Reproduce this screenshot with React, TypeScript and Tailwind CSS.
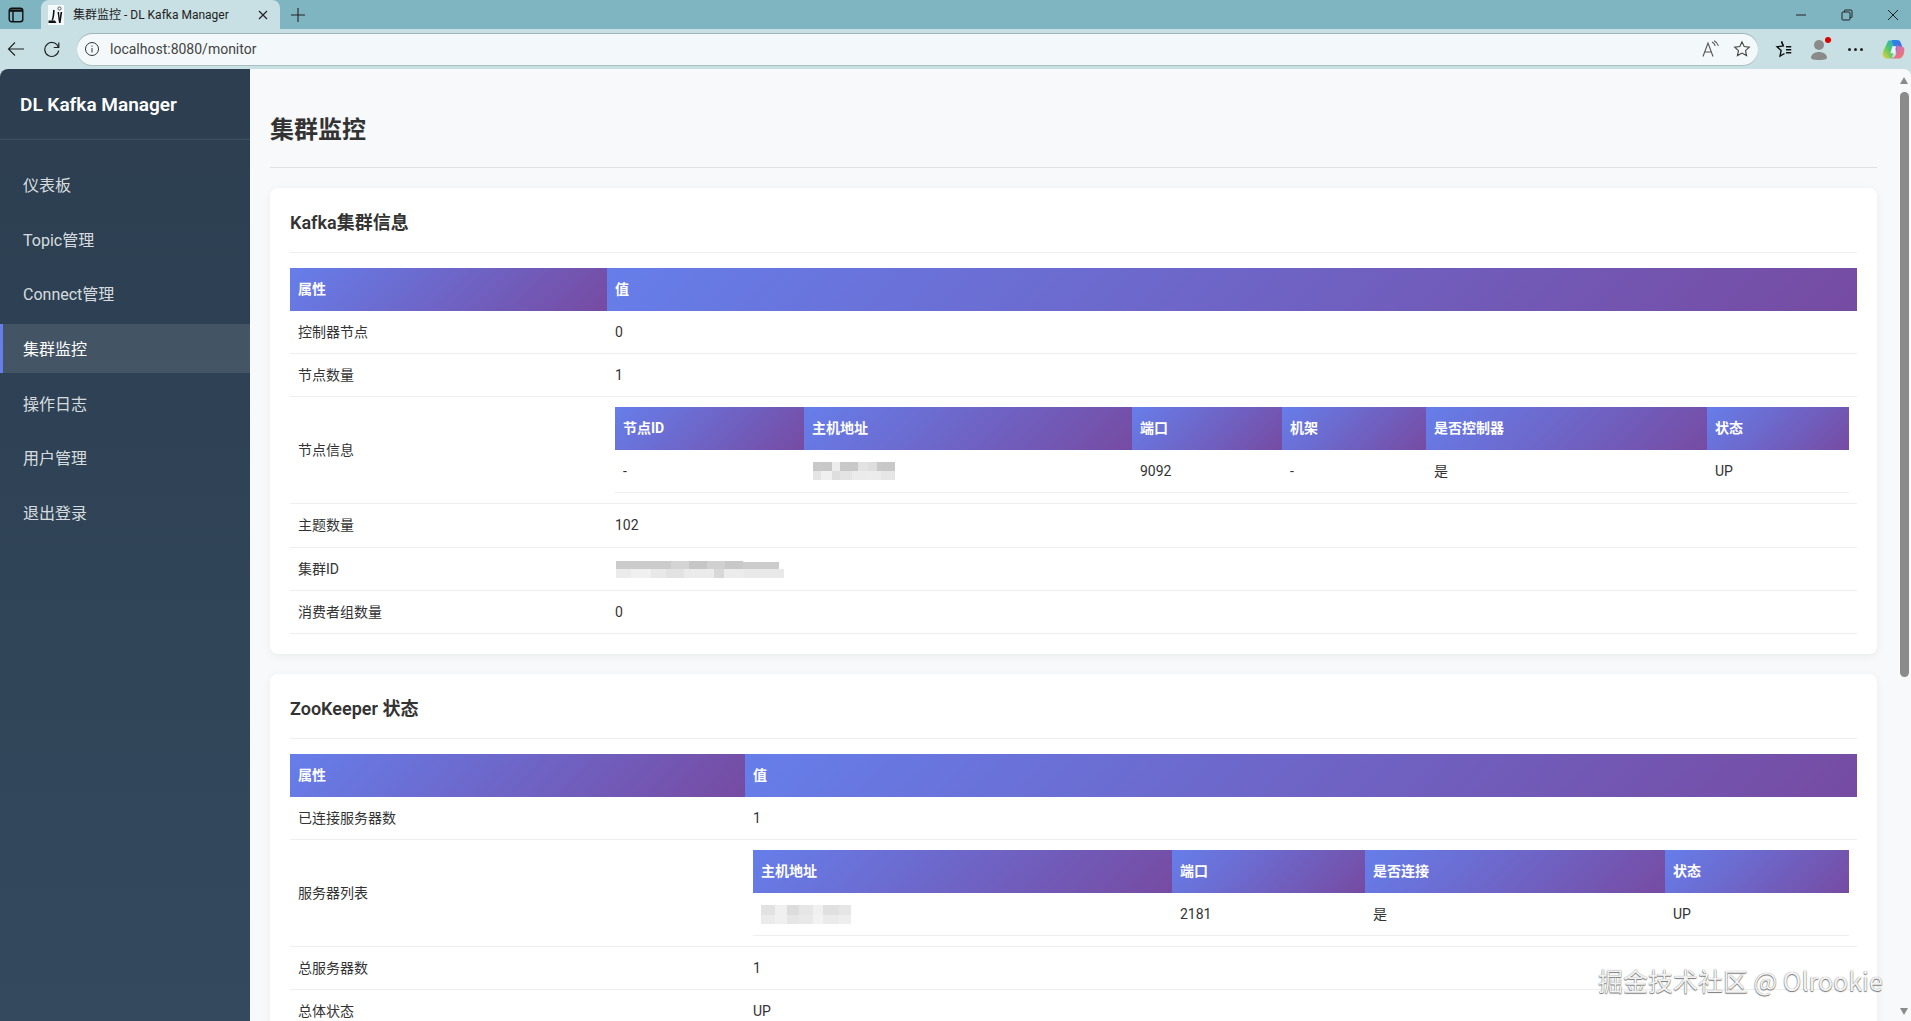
import React from "react";

const FONT = "[font-family:'Roboto','Noto_Sans_CJK_SC',sans-serif]";
const TH = "h-[43px] px-2 text-left text-[14px] font-bold text-white bg-[linear-gradient(135deg,#667eea_0%,#764ba2_100%)] align-middle";
const TD = "h-[43px] px-2 text-[14px] text-[#333] border-b border-[#eeeeee] align-middle";

type Cell = [number, number, number, number, string];

function Mosaic({ w, h, cells }: { w: number; h: number; cells: Cell[] }) {
  return (
    <svg width={w} height={h} viewBox={`0 0 ${w} ${h}`} className="block overflow-visible" style={{ filter: "blur(0.7px)" }}>
      {cells.map(([x, y, cw, ch, c], i) => (
        <rect key={i} x={x} y={y} width={cw} height={ch} fill={c} />
      ))}
    </svg>
  );
}

function Outer({ first, rows }: { first: number; rows: [string, React.ReactNode, boolean?][] }) {
  return (
    <table className="w-full table-fixed border-separate border-spacing-0">
      <colgroup>
        <col style={{ width: first }} />
        <col />
      </colgroup>
      <thead>
        <tr>
          <th className={TH}>属性</th>
          <th className={TH}>值</th>
        </tr>
      </thead>
      <tbody>
        {rows.map(([k, v, nested], i) => (
          <tr key={i} className={k === "主题数量" ? "h-[44px]" : ""}>
            <td className={TD}>{k}</td>
            <td className={TD + (nested ? " pt-[10px] pb-[10px]" : "")}>{v}</td>
          </tr>
        ))}
      </tbody>
    </table>
  );
}

function Inner({ widths, head, row }: { widths: number[]; head: string[]; row: React.ReactNode[] }) {
  return (
    <table className="w-full table-fixed border-separate border-spacing-0">
      <colgroup>
        {widths.map((w, i) => (
          <col key={i} style={{ width: w }} />
        ))}
      </colgroup>
      <thead>
        <tr>
          {head.map((h) => (
            <th key={h} className={TH}>{h}</th>
          ))}
        </tr>
      </thead>
      <tbody>
        <tr>
          {row.map((c, i) => (
            <td key={i} className={TD}>{c}</td>
          ))}
        </tr>
      </tbody>
    </table>
  );
}

const hostCells1: Cell[] = [
  [0, 0, 19, 9, "#c8c8c8"], [19, 0, 8, 9, "#ececec"], [27, 0, 18, 9, "#c8c8c8"], [45, 0, 10, 9, "#e2e2e2"], [55, 0, 9, 9, "#dddddd"], [64, 0, 18, 9, "#c8c8c8"],
  [0, 9, 8, 9, "#e4e4e4"], [8, 9, 11, 9, "#f0f0f0"], [19, 9, 8, 9, "#dedede"], [27, 9, 12, 9, "#e4e4e4"], [39, 9, 15, 9, "#ebebeb"], [54, 9, 14, 9, "#ececec"], [68, 9, 14, 9, "#e6e6e6"],
];
const hostCells2: Cell[] = [
  [0, 0, 14, 10, "#e2e2e2"], [14, 0, 12, 10, "#f0f0f0"], [26, 0, 12, 10, "#dcdcdc"], [38, 0, 14, 10, "#e6e6e6"], [52, 0, 10, 10, "#f0f0f0"], [62, 0, 16, 10, "#e0e0e0"], [78, 0, 12, 10, "#e6e6e6"],
  [0, 10, 14, 9, "#ebebeb"], [14, 10, 12, 9, "#f0f0f0"], [26, 10, 12, 9, "#e6e6e6"], [38, 10, 14, 9, "#e9e9e9"], [52, 10, 10, 9, "#f2f2f2"], [62, 10, 16, 9, "#ebebeb"], [78, 10, 12, 9, "#eeeeee"],
];
const idCells: Cell[] = [
  [0, 1, 55, 8, "#cbcbcb"], [55, 1, 18, 8, "#d4d4d4"], [73, 1, 18, 8, "#c6c6c6"], [91, 1, 18, 8, "#d0d0d0"], [109, 1, 18, 8, "#c8c8c8"], [127, 2, 36, 8, "#cccccc"],
  [0, 9, 15, 9, "#ebebeb"], [15, 9, 20, 9, "#f0f0f0"], [35, 9, 15, 9, "#e8e8e8"], [50, 9, 18, 9, "#e2e2e2"], [68, 9, 30, 9, "#ebebeb"], [98, 9, 10, 9, "#d8d8d8"], [108, 9, 20, 9, "#ececec"], [128, 9, 40, 9, "#e9e9e9"],
];

function Card({ title, pad, children }: { title: string; pad: string; children: React.ReactNode }) {
  return (
    <section className={"bg-white rounded-lg shadow-[0_2px_10px_rgba(0,0,0,0.06)] px-5 pt-5 mb-5 " + pad}>
      <h2 className="text-[18px] leading-[30px] font-semibold text-[#333] pb-[14px] mb-[15px] border-b border-[#eeeeee]">{title}</h2>
      {children}
    </section>
  );
}

const NAV = ["仪表板", "Topic管理", "Connect管理", "集群监控", "操作日志", "用户管理", "退出登录"];

export default function App() {
  return (
    <div className={`h-[1021px] w-[1911px] overflow-hidden flex flex-col relative bg-[#c8e0e4] ${FONT}`}>
      {/* tab strip */}
      <div className="h-[29px] shrink-0 bg-[#7fb4c1] flex items-center">
        <div className="w-[32px] mr-[9px] flex justify-center">
          <svg width="16" height="16" viewBox="0 0 16 16" fill="none" stroke="#111" strokeWidth="1.4">
            <rect x="1.2" y="1.2" width="13.6" height="13.6" rx="2.5" />
            <path d="M1.2 3.6h13.6" strokeWidth="2.4" />
            <path d="M5 4v10.5" />
          </svg>
        </div>
        <div className="w-[239px] h-full bg-[#c8e0e4] rounded-t-lg flex items-center pl-[7px] pr-[10px]">
          <svg width="16" height="20" viewBox="0 0 16 20" className="shrink-0">
            <rect width="16" height="20" fill="#f4fafa" />
            <path d="M0.5 15.5h6.5l1.5 2.500H0.500z" fill="#111" />
            <path d="M3.500 15.500C4.500 12 5 9 5 5h1.600c0 4-.6 8-1.600 10.500z" fill="#111" />
            <path d="M9.500 7h1.600l.5 6.500 1-6.500h1.600l-1.600 11H11z" fill="#111" />
            <circle cx="11.500" cy="3.500" r="1.600" fill="none" stroke="#555" />
          </svg>
          <span className="ml-[9px] text-[12px] text-[#222] whitespace-nowrap">集群监控 - DL Kafka Manager</span>
          <span className="ml-auto mr-[1px]">
            <svg width="12" height="12" viewBox="0 0 12 12" stroke="#222" strokeWidth="1.2"><path d="M2 2l8 8M10 2l-8 8" /></svg>
          </span>
        </div>
        <div className="ml-[10px]">
          <svg width="16" height="16" viewBox="0 0 16 16" stroke="#222" strokeWidth="1.1"><path d="M8 1v14M1 8h14" /></svg>
        </div>
        <div className="ml-auto flex items-center">
          <div className="w-[46px] flex justify-center"><svg width="12" height="12" viewBox="0 0 12 12" stroke="#222"><path d="M1 6h10" /></svg></div>
          <div className="w-[46px] flex justify-center"><svg width="12" height="12" viewBox="0 0 12 12" stroke="#222" fill="none"><rect x="1" y="3" width="8" height="8" rx="1" /><path d="M3.500 3V1.500a.5.5 0 0 1 .5-.5h6a1 1 0 0 1 1 1v6a.5.5 0 0 1-.5.5H9" /></svg></div>
          <div className="w-[46px] flex justify-center mr-[-5px]"><svg width="12" height="12" viewBox="0 0 12 12" stroke="#222"><path d="M1 1l10 10M11 1L1 11" /></svg></div>
        </div>
      </div>
      {/* toolbar */}
      <div className="h-[40px] shrink-0 bg-[#c8e0e4] flex items-center relative">
        <div className="w-[32px] flex justify-center">
          <svg width="18" height="18" viewBox="0 0 18 18" fill="none" stroke="#222" strokeWidth="1.1"><path d="M17 9H1.500M8 2.500L1.500 9 8 15.500" /></svg>
        </div>
        <div className="ml-[2px] w-[36px] flex justify-center">
          <svg width="18" height="18" viewBox="0 0 18 18" fill="none" stroke="#222" strokeWidth="1.2"><path d="M15.500 7.500a7 7 0 1 0 .2 3" /><path d="M15.800 2.500v5h-5" /></svg>
        </div>
        <div className="ml-[7px] w-[1681px] h-[31px] rounded-full bg-[#f3f9fa] shadow-[0_-1px_0_#9fb6ba,0_1px_0_#a9bfc2] flex items-center pl-[7px]">
          <svg width="16" height="16" viewBox="0 0 16 16" fill="none" stroke="#333" strokeWidth="1"><circle cx="8" cy="8" r="6.500" /><path d="M8 7v4.500M8 4.500v1.200" /></svg>
          <span className="ml-[10px] text-[14px] text-[#444]">localhost:8080/monitor</span>
          <div className="ml-auto flex items-center gap-[13px] pr-[7px]">
            <svg width="18" height="18" viewBox="0 0 18 18" fill="none" stroke="#555" strokeWidth="1.1"><path d="M1 16.500L6 3l5 13.500M3 12h6" /><path d="M10 2c1.800.8 2.800 2 3.200 3.800M12 .8c2.200 1 3.800 2.800 4.400 5" /></svg>
            <svg width="18" height="18" viewBox="0 0 24 24" fill="none" stroke="#444" strokeWidth="1.5"><path d="M12 2.500l2.900 6.200 6.800.8-5 4.600 1.400 6.700L12 17.400l-6.100 3.400 1.400-6.700-5-4.600 6.800-.8z" /></svg>
          </div>
        </div>
        <div className="flex items-center ml-[16px]">
          <svg width="18" height="18" viewBox="0 0 24 24" fill="none" stroke="#111" strokeWidth="1.8"><path d="M10 2L12.500 8 4 9l5.500 5L8 21.500l6-3.500" /><path d="M10 2l2 5M16 9h7M16 13h7M16 17h7" /></svg>
          <div className="relative ml-[18px] w-[18px] h-[22px]">
            <svg width="18" height="22" viewBox="0 0 18 22" fill="#8a8a8a"><circle cx="9" cy="7" r="5" /><path d="M1 20c0-4 4-6 8-6s8 2 8 6c0 1-3 2-8 2s-8-1-8-2z" /></svg>
            <span className="absolute -top-[1px] -right-[3px] w-[6px] h-[6px] rounded-full bg-[#e00000]" />
          </div>
          <div className="ml-[20px] flex gap-[3px]">
            <span className="w-[3px] h-[3px] rounded-full bg-[#222]" /><span className="w-[3px] h-[3px] rounded-full bg-[#222]" /><span className="w-[3px] h-[3px] rounded-full bg-[#222]" />
          </div>
          <svg className="ml-[19px]" width="23" height="23" viewBox="0 0 22 22">
            <defs>
              <linearGradient id="c1" x1="0" y1="0" x2="1" y2="1"><stop offset="0" stopColor="#1e8fe8" /><stop offset="1" stopColor="#6a4fe0" /></linearGradient>
              <linearGradient id="c2" x1="0" y1="1" x2="1" y2="0"><stop offset="0" stopColor="#f4d03a" /><stop offset=".5" stopColor="#4fc96a" /><stop offset="1" stopColor="#2a9df4" /></linearGradient>
              <linearGradient id="c3" x1="0" y1="0" x2="1" y2="1"><stop offset="0" stopColor="#c56be8" /><stop offset="1" stopColor="#f4785a" /></linearGradient>
            </defs>
            <path d="M6 2.500h7l-3.500 17H4C1 19.500 0 16 1 13z" fill="url(#c2)" />
            <path d="M9 2h5.500c2 0 3 1.200 3.600 3L21 13l-6 3z" fill="url(#c1)" />
            <path d="M14 7l7 2c1 3 0 10.500-5 10.500H8c3 0 5-2 5.500-4.500z" fill="url(#c3)" />
            <path d="M10 8h3.500L12 14.500H8z" fill="#eef6f7" />
          </svg>
        </div>
      </div>
      {/* page */}
      <div className="flex-1 min-h-0 flex bg-[#f8f9fa] rounded-t-lg overflow-hidden relative">
        <aside className="w-[250px] shrink-0 bg-[linear-gradient(180deg,#2c3e50_0%,#34495e_100%)] text-white">
          <div className="h-[71px] px-5 pt-[2px] flex items-center border-b border-[#3d4f61] text-[19px] font-semibold">DL Kafka Manager</div>
          <nav className="pt-5 flex flex-col gap-[5.7px]">
            {NAV.map((n) => (
              <div key={n} className={"h-[49px] pt-[3px] flex items-center text-[16px] " + (n === "集群监控" ? "bg-white/10 border-l-[3px] border-[#667eea] pl-[20px] text-white" : "pl-[23px] text-[#ecf0f1]/90")}>{n}</div>
            ))}
          </nav>
        </aside>
        <main className="flex-1 min-w-0 pl-5 pr-[34px] pt-5 overflow-hidden">
          <h1 className="text-[24px] leading-[36px] font-bold text-[#333] pt-[23px] pb-[19px] mb-5 border-b border-[#e0e0e0]">集群监控</h1>
          <Card title="Kafka集群信息" pad="pb-5">
            <Outer
              first={317}
              rows={[
                ["控制器节点", "0"],
                ["节点数量", "1"],
                ["节点信息", <Inner widths={[189, 328, 150, 144, 281, 142]} head={["节点ID", "主机地址", "端口", "机架", "是否控制器", "状态"]} row={["-", <div className="ml-[1px]"><Mosaic w={82} h={18} cells={hostCells1} /></div>, "9092", "-", "是", "UP"]} />, true],
                ["主题数量", "102"],
                ["集群ID", <div className="ml-[1px]"><Mosaic w={168} h={18} cells={idCells} /></div>],
                ["消费者组数量", "0"],
              ]}
            />
          </Card>
          <Card title="ZooKeeper 状态" pad="pb-5">
            <Outer
              first={455}
              rows={[
                ["已连接服务器数", "1"],
                ["服务器列表", <Inner widths={[419, 193, 300, 184]} head={["主机地址", "端口", "是否连接", "状态"]} row={[<Mosaic w={90} h={19} cells={hostCells2} />, "2181", "是", "UP"]} />, true],
                ["总服务器数", "1"],
                ["总体状态", "UP"],
              ]}
            />
          </Card>
        </main>
        {/* scrollbar */}
        <div className="absolute right-0 top-0 bottom-0 w-[14px] flex flex-col items-center bg-[#f8f9fa]">
          <div className="mt-[8px] w-0 h-0 border-x-[4.5px] border-x-transparent border-b-[7px] border-b-[#8b8b8b]" />
          <div className="mt-[8px] w-[9px] h-[585px] rounded-full bg-[#8b8b8b]" />
          <div className="mt-auto mb-[6px] w-0 h-0 border-x-[4.5px] border-x-transparent border-t-[7px] border-t-[#8b8b8b]" />
        </div>
      </div>
      <div className="absolute left-[1598px] top-[964px] text-[25px] leading-[32px] whitespace-nowrap text-[#f2f2f2] [font-family:'Noto_Sans_CJK_SC',sans-serif] [text-shadow:0_1px_1px_rgba(0,0,0,0.5),0_0_1px_rgba(0,0,0,0.5)]">掘金技术社区 @ Olrookie</div>
    </div>
  );
}
